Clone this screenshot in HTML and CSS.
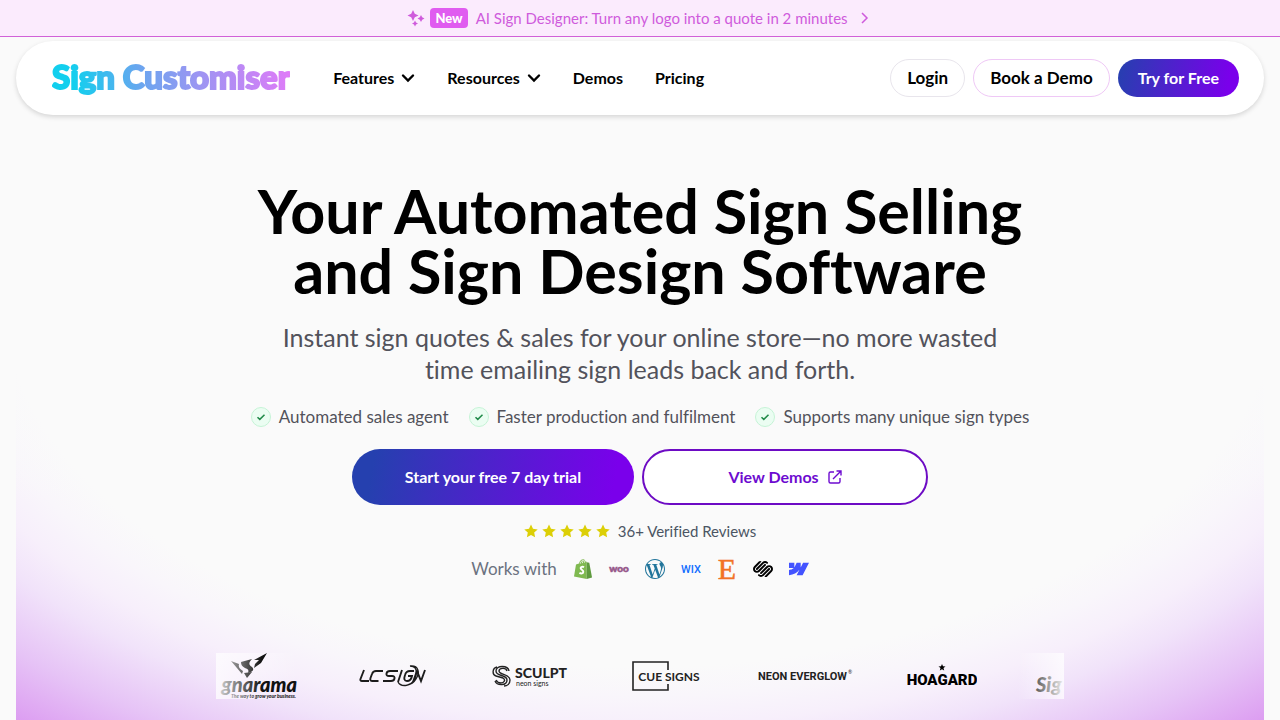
FILE: index.html
```html
<!DOCTYPE html>
<html lang="en">
<head>
    <meta charset="UTF-8">
    <meta name="viewport" content="width=device-width, initial-scale=1.0">
    <title>Sign Customiser | Automated Sign Selling Software</title>
    <link rel="stylesheet" href="styles.css">
</head>
<body>

    <a class="announcement" href="#">
        <svg class="sparkles" viewBox="0 0 16 16" fill="currentColor" aria-hidden="true">
            <path d="M5 0 6.800 3.700 10.500 5.500 6.800 7.300 5 11 3.200 7.300-.5 5.500 3.200 3.700Z"/>
            <path d="M13 5 14.200 7.300 16.500 8.500 14.200 9.700 13 12 11.800 9.700 9.500 8.500 11.800 7.300Z"/>
            <path d="M7 10.500 8 12.500 10 13.500 8 14.500 7 16.500 6 14.500 4 13.500 6 12.500Z"/>
        </svg>
        <span class="tag">New</span>
        <span>AI Sign Designer: Turn any logo into a quote in 2 minutes</span>
        <svg class="arrow" viewBox="0 0 16 16" fill="none" stroke="currentColor" stroke-width="1.500" aria-hidden="true"><path d="M6 3l5 5-5 5"/></svg>
    </a>

    <header class="navbar">
        <a class="logo" href="#">Sign Customiser</a>
        <nav class="menu">
            <button type="button">Features
                <svg viewBox="0 0 14 14" fill="none" stroke="currentColor" stroke-width="2.400" stroke-linecap="round" aria-hidden="true"><path d="M2 4.500l5 5 5-5"/></svg>
            </button>
            <button type="button">Resources
                <svg viewBox="0 0 14 14" fill="none" stroke="currentColor" stroke-width="2.400" stroke-linecap="round" aria-hidden="true"><path d="M2 4.500l5 5 5-5"/></svg>
            </button>
            <a href="#">Demos</a>
            <a href="#">Pricing</a>
        </nav>
        <div class="actions">
            <a class="pill" href="#">Login</a>
            <a class="pill pill-pink" href="#">Book a Demo</a>
            <a class="pill pill-solid" href="#">Try for Free</a>
        </div>
    </header>

    <main class="hero">
        <h1>Your Automated Sign Selling<br>and Sign Design Software</h1>
        <p class="lead">Instant sign quotes &amp; sales for your online store—no more wasted<br>time emailing sign leads back and forth.</p>

        <ul class="benefits">
            <li><svg viewBox="0 0 20 20" aria-hidden="true"><circle cx="10" cy="10" r="9.500"/><path d="M6.500 10.200l2.300 2.200 4.700-4.600"/></svg>Automated sales agent</li>
            <li><svg viewBox="0 0 20 20" aria-hidden="true"><circle cx="10" cy="10" r="9.500"/><path d="M6.500 10.200l2.300 2.200 4.700-4.600"/></svg>Faster production and fulfilment</li>
            <li><svg viewBox="0 0 20 20" aria-hidden="true"><circle cx="10" cy="10" r="9.500"/><path d="M6.500 10.200l2.300 2.200 4.700-4.600"/></svg>Supports many unique sign types</li>
        </ul>

        <div class="cta">
            <a class="btn btn-solid" href="#">Start your free 7 day trial</a>
            <a class="btn btn-outline" href="#">View Demos
                <svg viewBox="0 0 14 14" fill="none" stroke="currentColor" stroke-width="1.400" aria-hidden="true"><path d="M6 2H2.500A1.500 1.500 0 0 0 1 3.500v8A1.500 1.500 0 0 0 2.500 13h8a1.500 1.500 0 0 0 1.500-1.500V8M8.500 1H13v4.500M13 1L5 9"/></svg>
            </a>
        </div>

        <div class="reviews">
            <svg class="stars" viewBox="0 0 86 14" fill="currentColor" role="img" aria-label="5 stars">
                <defs><path id="star" d="M7 0.500l2 4.300 4.700.6-3.500 3.200.9 4.700L7 11l-4.100 2.300.9-4.700L.3 5.400 5 4.800z"/></defs>
                <use href="#star"/>
                <use href="#star" x="18"/>
                <use href="#star" x="36"/>
                <use href="#star" x="54"/>
                <use href="#star" x="72"/>
            </svg>
            <span>36+ Verified Reviews</span>
        </div>

        <div class="platforms">
            <span>Works with</span>
            <svg viewBox="0 0 20 20" role="img" aria-label="Shopify">
                <path fill="#7fb950" d="M3 5.500l3-.9C6.600 2 8.200.2 10.200.2c1.100 0 1.800.9 2.200 2.300l1.300.2V20L1 17.600z"/>
                <path fill="#5e9a3e" d="M13.700 3.300l2.600.5L19 18.600 13.700 20z"/>
                <path fill="none" stroke="#fafafa" stroke-width=".8" d="M7.200 4.700c.5-2 1.600-3.300 2.800-3.500M9.300 4.200c.2-1.400.8-2.400 1.600-2.900.5.600.7 1.500.7 2.400"/>
                <path fill="none" stroke="#fff" stroke-width="1.900" d="M11 8.200c-1.300-.8-3.400-.5-3.400.9 0 1.600 2.700 1.600 2.700 3.600 0 1.800-2 2.400-3.900 1.200"/>
            </svg>
            <svg viewBox="0 0 20 20" role="img" aria-label="WooCommerce">
                <text class="woo" x="10" y="13" text-anchor="middle">woo</text>
            </svg>
            <svg viewBox="0 0 24 24" fill="#21759b" role="img" aria-label="WordPress">
                <path d="M21.469 6.825c.84 1.537 1.318 3.300 1.318 5.175 0 3.979-2.156 7.456-5.363 9.325l3.295-9.527c.615-1.540.82-2.771.82-3.864 0-.405-.026-.78-.07-1.110m-7.981.105c.647-.03 1.232-.105 1.232-.105.582-.075.514-.93-.067-.899 0 0-1.755.135-2.880.135-1.064 0-2.850-.15-2.850-.15-.585-.03-.661.855-.075.885 0 0 .54.061 1.125.09l1.680 4.605-2.370 7.080L5.354 6.900c.649-.03 1.234-.1 1.234-.1.585-.075.516-.93-.065-.896 0 0-1.746.138-2.874.138-.2 0-.438-.008-.69-.015C4.911 3.150 8.235 1.215 12 1.215c2.809 0 5.365 1.072 7.286 2.833-.046-.003-.091-.009-.141-.009-1.060 0-1.812.923-1.812 1.914 0 .89.513 1.643 1.060 2.531.411.72.89 1.643.89 2.977 0 .915-.354 1.994-.821 3.479l-1.075 3.585-3.900-11.610.001.014zM12 22.784c-1.059 0-2.081-.153-3.048-.437l3.237-9.406 3.315 9.087c.024.053.05.101.078.149-1.120.393-2.325.609-3.582.609M1.211 12c0-1.564.336-3.050.935-4.390L7.290 21.709C3.694 19.960 1.212 16.271 1.211 12M12 0C5.385 0 0 5.385 0 12s5.385 12 12 12 12-5.385 12-12S18.615 0 12 0"/>
            </svg>
            <svg viewBox="0 0 20 20" role="img" aria-label="Wix">
                <text class="wix" x="10" y="14" text-anchor="middle">WIX</text>
            </svg>
            <svg viewBox="0 0 20 20" role="img" aria-label="Etsy">
                <text class="etsy" x="10" y="20" text-anchor="middle">E</text>
            </svg>
            <svg viewBox="0 0 24 24" role="img" aria-label="Squarespace">
                <path d="M22.655 8.719c-1.802-1.801-4.726-1.801-6.564 0l-7.351 7.350c-.45.45-.45 1.200 0 1.650.45.449 1.200.449 1.650 0l7.351-7.351c.899-.899 2.362-.899 3.264 0 .9.9.9 2.364 0 3.264l-7.239 7.239c.9.899 2.362.899 3.263 0l5.589-5.589c1.836-1.838 1.836-4.763.037-6.563zm-2.475 2.437c-.451-.45-1.201-.45-1.650 0l-7.354 7.389c-.9.899-2.361.899-3.262 0-.45-.45-1.200-.45-1.650 0s-.45 1.200 0 1.649c1.801 1.801 4.726 1.801 6.564 0l7.351-7.350c.449-.487.449-1.239.001-1.688zm-2.439-7.350c-1.801-1.801-4.726-1.801-6.564 0l-7.351 7.351c-.45.449-.45 1.199 0 1.649s1.200.45 1.650 0l7.395-7.351c.9-.899 2.371-.899 3.270 0 .451.45 1.201.45 1.650 0 .421-.487.421-1.199-.05-1.649zm-2.475 2.437c-.45-.45-1.200-.45-1.650 0l-7.351 7.389c-.899.9-2.363.9-3.265 0-.9-.899-.9-2.363 0-3.264l7.239-7.239c-.9-.9-2.362-.9-3.263 0L1.350 8.719c-1.800 1.800-1.800 4.763 0 6.563 1.801 1.801 4.725 1.801 6.564 0l7.350-7.351c.451-.488.451-1.238 0-1.688z"/>
            </svg>
            <svg viewBox="0 0 24 24" fill="#4353ff" role="img" aria-label="Webflow">
                <path d="m24 4.515-7.658 14.970H9.149l3.205-6.204h-.144C9.566 16.713 5.621 18.973 0 19.485v-6.118s3.596-.213 5.710-2.435H0V4.515h6.417v5.278l.144-.001 2.622-5.277h4.854v5.244h.144l2.720-5.244H24Z"/>
            </svg>
        </div>

        <div class="customers">
            <svg width="82" height="46" viewBox="0 0 82 46" role="img" aria-label="Signarama">
                <defs>
                    <linearGradient id="plate-left"><stop offset="0" stop-color="#fff" stop-opacity=".75"/><stop offset="1" stop-color="#fff" stop-opacity="0"/></linearGradient>
                    <linearGradient id="fade-left" gradientUnits="userSpaceOnUse" x1="0" x2="46"><stop offset="0" stop-color="#ddd"/><stop offset="1" stop-color="#111"/></linearGradient>
                </defs>
                <rect width="82" height="46" fill="url(#plate-left)"/>
                <g fill="url(#fade-left)">
                    <path d="M15 8l8 3c-1 3 1 5 4 7l-1 3z"/>
                    <path d="M25 9l11-3c-4 4-3 6 0 8 3 3 0 5-4 6 1-3 0-4-3-5-3-2-4-3-4-6z"/>
                    <path d="M28 20l8-1-5 6z"/>
                    <path d="M38 7l13-7-6 10-7 5 1-4 4-4z"/>
                    <text class="signarama" x="81" y="39" text-anchor="end">gnarama</text>
                    <text class="signarama-tag" x="80" y="45" text-anchor="end">The way to grow your business.</text>
                </g>
            </svg>
            <svg width="68" height="22" viewBox="0 0 68 22" role="img" aria-label="LC Sign" fill="none" stroke="#1c1c1c" stroke-width="1.900">
                <path d="M5 5L1.500 14q-.7 2 1.500 2h7M24 6h-7q-3 0-4 3l-1.500 4q-1 3 2 3h6M39 6h-8q-3 0-3.500 2.500T30 11h3q3 0 2.500 2.500T32 16h-8M43 5l-4 12M55 6h-4q-4 0-5 4-2 6 2 6 4 0 5-5h-4M54 17l4-11 4 10 4-11"/>
                <path stroke-width="1.300" d="M39 17c4 6 16 4 18-7 1-6-1-9-6-9 9-1 10 7 6 13-4 7-15 9-18 3"/>
            </svg>
            <svg width="76" height="22" viewBox="0 0 76 22" role="img" aria-label="Sculpt Neon Signs">
                <path fill="none" stroke="#222" stroke-width="1.400" d="M17 6C16 0 4 0 4 6s11 3 11 9-10 6-12 1M15 6c-1-4-8-3-8 0 0 4 11 3 11 9 0 4-3 6-6 6M5 2C0 3 0 10 4 11l7 2c3 2 1 5-2 5-2 0-4-1-5-3"/>
                <text class="sculpt" x="23" y="13">SCULPT</text>
                <text class="sculpt-sub" x="24" y="21">neon signs</text>
            </svg>
            <svg width="70" height="30" viewBox="0 0 70 30" role="img" aria-label="Cue Signs">
                <path fill="none" stroke="#222" stroke-width="1.600" d="M36 9V1H1v28h35v-6"/>
                <text class="cue" x="37" y="20" text-anchor="middle">CUE SIGNS</text>
            </svg>
            <svg width="96" height="16" viewBox="0 0 96 16" role="img" aria-label="Neon Everglow">
                <text class="everglow" x="1" y="12">NEON EVERGLOW</text>
                <text class="reg" x="91" y="6">®</text>
            </svg>
            <svg width="70" height="26" viewBox="0 0 70 26" role="img" aria-label="Hoagard">
                <path d="M35 1l1 2.200 2.500.2-2 1.600.7 2.500L35 6.200l-2.200 1.300.7-2.500-2-1.600 2.500-.2z"/>
                <text class="hoagard" x="35" y="22" text-anchor="middle">HOAGARD</text>
            </svg>
            <svg width="46" height="46" viewBox="0 0 46 46" role="img" aria-label="Signarama">
                <defs>
                    <linearGradient id="plate-right"><stop offset="0" stop-color="#fff" stop-opacity="0"/><stop offset="1" stop-color="#fff" stop-opacity=".75"/></linearGradient>
                    <linearGradient id="fade-right" gradientUnits="userSpaceOnUse" x1="16" x2="46"><stop offset="0" stop-color="#555"/><stop offset="1" stop-color="#eee"/></linearGradient>
                </defs>
                <rect width="46" height="46" fill="url(#plate-right)"/>
                <text class="signarama" x="18" y="39" fill="url(#fade-right)">Sig</text>
            </svg>
        </div>
    </main>

</body>
</html>
```
FILE: styles.css
```css
* {
    box-sizing: border-box;
}
body {
    font-family: Lato, 'Open Sans', sans-serif;
    font-size: 16px;
    line-height: 24px;
    font-variant-ligatures: none;
    background-color: #fafafa;
    color: #000;
    margin: 0;
}
a {
    color: inherit;
    text-decoration: none;
}

/* announcement bar */
.announcement {
    display: flex;
    align-items: center;
    justify-content: center;
    gap: 8px;
    height: 37px;
    font-size: 15px;
    color: #cf5bdc;
    background: #fbebfd;
    border-bottom: 1px solid #d161d8;
}
.sparkles {
    width: 16px;
    height: 16px;
    margin-right: -2px;
    overflow: visible;
}
.arrow {
    width: 16px;
    height: 16px;
}
.tag {
    padding: 0 5px;
    line-height: 20px;
    font-size: 13px;
    font-weight: 900;
    color: #fff;
    background: #e05cf0;
    border-radius: 4px;
}

/* navigation */
.navbar {
    display: flex;
    align-items: center;
    height: 74px;
    margin: 4px 16px 0;
    padding: 0 25px 0 36px;
    background: #fff;
    border-radius: 37px;
    box-shadow: 0 2px 5px rgba(0, 0, 0, 0.15);
    position: relative;
    z-index: 1;
}
.logo {
    padding-bottom: 4px;
    font-size: 33px;
    font-weight: 900;
    line-height: 44px;
    color: transparent;
    background: linear-gradient(80deg, #12cfee 10%, #6ba5ef 38%, #9a96f2 60%, #e27af8);
    -webkit-background-clip: text;
    background-clip: text;
    -webkit-text-stroke: 2px transparent;
}
.menu {
    display: flex;
    gap: 32px;
    margin-left: 43px;
    font-weight: 700;
}
.menu button {
    display: flex;
    align-items: center;
    gap: 7px;
    padding: 0;
    font: inherit;
    color: inherit;
    background: none;
    border: none;
    cursor: pointer;
}
.menu svg {
    width: 14px;
    height: 14px;
}
.actions {
    display: flex;
    gap: 8px;
    margin-left: auto;
    font-weight: 700;
}
.pill {
    padding: 6px 16px;
    font-size: 17px;
    border: 1px solid #e8e5ec;
    border-radius: 20px;
}
.pill-pink {
    border-color: #efc8f6;
}
.pill-solid {
    padding: 7px 20px;
    font-size: 16px;
    color: #fff;
    border: none;
    background: linear-gradient(100deg, #2540af, #7a00eb 90%);
}

/* hero */
.hero {
    display: flex;
    flex-direction: column;
    align-items: center;
    margin: 0 16px;
    padding: 66px 16px 21px;
    text-align: center;
    background:
        linear-gradient(#fafafa 30%, transparent 65%),
        radial-gradient(ellipse 100% 120% at 50% 30%, #fafafa 51%, #f9f6fb 55%, #f7effb 59%, #f1e3fa 63%, #e6c3f6 70%, #dc9cf1 77%);
}
h1 {
    margin: 0;
    font-size: 61px;
    font-weight: 700;
    line-height: 60px;
}
.lead {
    margin: 20px 0;
    font-size: 25px;
    line-height: 32px;
    color: #52525b;
}
.benefits {
    display: flex;
    gap: 20px;
    margin: 0;
    padding: 0;
    list-style: none;
    font-size: 17px;
    color: #52525b;
}
.benefits li {
    display: flex;
    align-items: center;
    gap: 8px;
}
.benefits svg {
    width: 20px;
    height: 20px;
    stroke-width: 1;
}
.benefits circle {
    fill: #ebfdf2;
    stroke: #c5f3d6;
}
.benefits path {
    fill: none;
    stroke: #218a49;
    stroke-width: 1.5;
}
.cta {
    display: flex;
    gap: 8px;
    width: 100%;
    max-width: 576px;
    margin-top: 20px;
}
.btn {
    display: flex;
    flex: 1 1 0;
    align-items: center;
    justify-content: center;
    gap: 9px;
    height: 56px;
    font-weight: 700;
    border-radius: 28px;
}
.btn-solid {
    color: #fff;
    background: linear-gradient(100deg, #2540af 8%, #7a00eb 92%);
}
.btn-outline {
    color: #6d0bd0;
    background: #fff;
    border: 2px solid #6d0bc4;
}
.btn svg {
    width: 14px;
    height: 14px;
}
.reviews {
    display: flex;
    align-items: center;
    gap: 8px;
    margin-top: 16px;
    font-size: 15px;
    line-height: 20px;
    color: #4b5563;
}
.stars {
    width: 86px;
    height: 14px;
    color: #dccf06;
}
.platforms {
    display: flex;
    align-items: center;
    gap: 16px;
    margin-top: 16px;
    font-size: 17px;
    color: #6b7280;
}
.platforms svg {
    width: 20px;
    height: 20px;
    overflow: visible;
}
.woo {
    font: 900 10px Lato, sans-serif;
    fill: #96588a;
    stroke: #96588a;
    stroke-width: 0.6px;
}
.wix {
    font: 500 11px Roboto, sans-serif;
    fill: #116dff;
}
.etsy {
    font: 30px 'Liberation Serif', serif;
    fill: #f27224;
    stroke: #f27224;
    stroke-width: 0.5px;
}

/* customer logos */
.customers {
    display: grid;
    grid-template-columns: 108px repeat(5, 1fr) 53px;
    align-items: center;
    justify-items: center;
    width: 100%;
    max-width: 848px;
    margin-top: 72px;
}
.customers svg:first-child {
    justify-self: start;
}
.customers svg:last-child {
    justify-self: end;
}
.signarama {
    font: italic 900 20px Lato, sans-serif;
}
.signarama-tag {
    font: italic 700 5px Lato, sans-serif;
}
.sculpt {
    font: 900 14px Lato, sans-serif;
    fill: #222;
}
.sculpt-sub {
    font: 7px Lato, sans-serif;
    fill: #222;
}
.cue {
    font: 700 12px Lato, sans-serif;
    fill: #222;
}
.everglow {
    font: 700 11px Roboto, sans-serif;
    fill: #222;
}
.reg {
    font: 5px Lato, sans-serif;
    fill: #222;
}
.hoagard {
    font: 900 15px Roboto, sans-serif;
}
```
